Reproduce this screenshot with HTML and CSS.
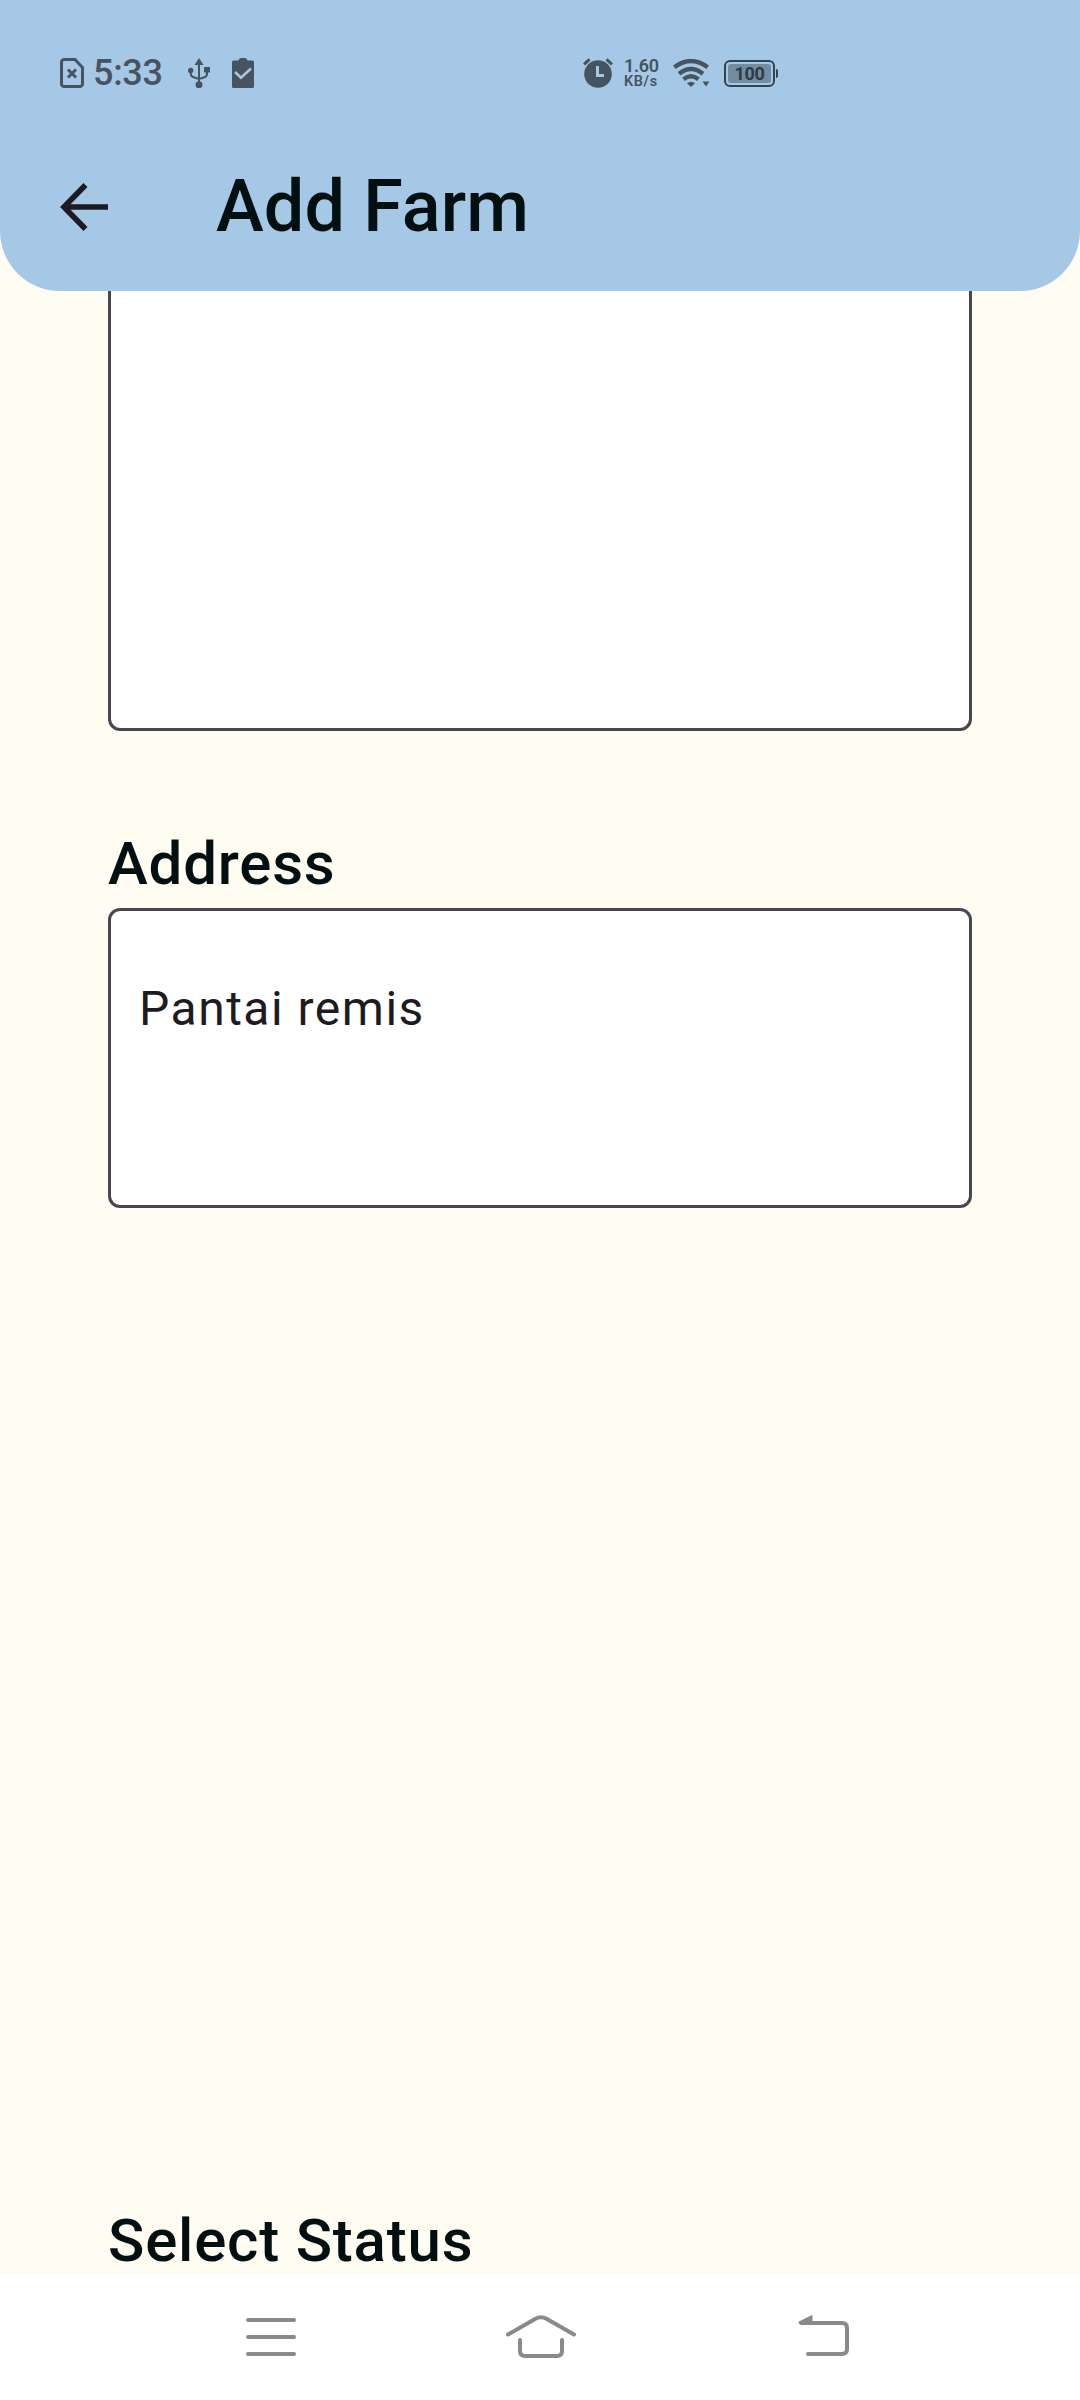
FILE: index.html
```html
<!DOCTYPE html>
<html lang="en">
<head>
<meta charset="utf-8">
<title>Add Farm</title>
<link rel="stylesheet" href="styles.css">
</head>
<body>
<div class="screen">
  <header class="header">
    <div class="status">
      <svg class="ic-sim" width="24" height="30" viewBox="0 0 24 30"><path d="M4 1.5H15L22.5 9.500V26a2.500 2.500 0 0 1-2.500 2.500H4A2.500 2.500 0 0 1 1.500 26V4A2.500 2.500 0 0 1 4 1.500Z" fill="none" stroke="currentColor" stroke-width="3"/><path d="M8 11.500l8 8M16 11.500l-8 8" stroke="currentColor" stroke-width="3"/></svg>
      <span class="time">5:33</span>
      <svg class="ic-usb" width="22" height="30" viewBox="0 0 22 30"><path d="M11 5V27M2.700 13v2.500q0 3 3 3.800L11 21l5.500-1.700q2.500-.8 2.500-3.800V13" fill="none" stroke="currentColor" stroke-width="2"/><path d="M11 0l4.500 7h-9Z" fill="currentColor"/><circle cx="2.700" cy="12.500" r="2.700" fill="currentColor"/><rect x="16" y="9" width="6" height="5.500" fill="currentColor"/><circle cx="11" cy="26.700" r="3.500" fill="currentColor"/></svg>
      <svg class="ic-clip" width="22" height="30" viewBox="0 0 22 30"><path d="M1.500 2.500H6.500Q7 0 9 0h4q2 0 2.500 2.500h5Q22 2.500 22 4V28.500Q22 30 20.500 30H1.500Q0 30 0 28.500V4Q0 2.500 1.500 2.500Z" fill="currentColor"/><path d="M3 14l6 5.700L19 10.500" fill="none" stroke="#a5c8e6" stroke-width="2.500"/></svg>
      <svg class="ic-alarm" width="30" height="30" viewBox="0 0 30 30"><circle cx="15" cy="16" r="13.800" fill="currentColor"/><path d="M1 6.300L6.500 1.300M23.500 1.300L29 6.300" stroke="currentColor" stroke-width="3"/><path d="M14.500 8v9.500H21" fill="none" stroke="#a5c8e6" stroke-width="3"/></svg>
      <div class="rate"><span class="rate-n">1.60</span><span class="rate-u">KB/s</span></div>
      <svg class="ic-wifi" width="37" height="28" viewBox="0 0 37 28"><g fill="none" stroke="currentColor" stroke-width="4.300"><path d="M1.300 8.200Q18 -4.200 34.700 8.200"/><path d="M6 14.700Q18 5.200 30 14.700"/><path d="M10.500 20.300Q18 14.300 25.500 20.300"/></g><path d="M14 24.300Q18 21.300 22 24.300L18 28ZM29.500 22.500h7L33 27.500Z" fill="currentColor"/></svg>
      <div class="battery"><span>100</span></div>
    </div>
    <div class="appbar">
      <svg width="48" height="48" viewBox="0 0 48 48"><path d="M25.500 2L4 24l21.500 22M4.500 24H48" fill="none" stroke="#1d1b20" stroke-width="5.600"/></svg>
      <h1>Add Farm</h1>
    </div>
  </header>
  <main class="content">
    <div class="box box-map"></div>
    <h2>Address</h2>
    <div class="box box-address">Pantai remis</div>
    <h2 class="status-label">Select Status</h2>
  </main>
  <nav class="nav">
    <svg width="50" height="38" viewBox="0 0 50 38"><path d="M2 2H48M2 19H48M2 36H48"/></svg>
    <svg width="70" height="44" viewBox="0 0 70 44"><path d="M2 19.500L29.500 3.700Q35 .8 40.500 3.700L68 19.500M14 25V36q0 5 5 5h32q5 0 5-5V25"/></svg>
    <svg width="52" height="44" viewBox="0 0 52 44"><path d="M3 8H44q5 0 5 5v21q0 5-5 5H10"/><path class="tip" d="M1 7L14 .5V8H2Z"/></svg>
  </nav>
</div>
</body>
</html>
```
FILE: styles.css
```css
* { box-sizing: border-box; }
body { margin: 0; font-family: Roboto, "Liberation Sans", sans-serif; }
svg { display: block; flex: none; }
.screen { width: 1080px; height: 2400px; display: flex; flex-direction: column; background: #fffdf1; overflow: hidden; }
.header { height: 291px; flex: none; background: #a5c8e6; border-radius: 0 0 60px 60px; position: relative; z-index: 1; }
.status { height: 146px; padding-left: 60px; display: flex; align-items: center; color: #45545f; }
.time { width: 75px; margin-left: 9px; font-size: 36px; font-weight: 500; line-height: 42px; letter-spacing: -.3px; }
.ic-usb { margin-left: 20px; }
.ic-clip { margin-left: 22px; }
.ic-alarm { margin-left: 329px; }
.rate { width: 36px; margin-left: 11px; display: flex; flex-direction: column; font-weight: 600; white-space: nowrap; }
.rate-n { font-size: 18px; line-height: 17px; letter-spacing: -.3px; }
.rate-u { font-size: 14.500px; line-height: 15px; letter-spacing: .6px; }
.ic-wifi { margin-left: 13px; }
.battery { width: 51px; height: 27px; margin-left: 14px; border: 2px solid #35434e; border-radius: 6px; padding: 2px; position: relative; }
.battery span { display: block; height: 19px; background: #728da2; border-radius: 3px; color: #2e3b45; font-size: 18px; line-height: 20px; font-weight: 700; letter-spacing: -.3px; text-align: center; }
.battery::after { content: ""; position: absolute; left: 50px; top: 7px; width: 2px; height: 9px; background: #35434e; border-radius: 0 2px 2px 0; }
.appbar { height: 122px; padding-left: 60px; display: flex; align-items: center; gap: 108px; }
h1, h2 { margin: 0; font-weight: 500; color: #001010; white-space: nowrap; }
h1 { font-size: 72px; line-height: 84px; letter-spacing: .1px; }
h2 { font-size: 60px; line-height: 60px; letter-spacing: .8px; }
.content { flex: 1; min-height: 0; padding: 0 108px; overflow: hidden; margin-top: -60px; }
.box { background: #fff; border: 3px solid #49454f; border-radius: 12px; }
.box-map { height: 500px; margin-bottom: 103px; }
.content h2 + .box { margin-top: 14px; }
.box-address { height: 300px; padding: 70px 28px; font-size: 48px; line-height: 56px; letter-spacing: 1.500px; color: #1d1b20; }
.status-label { margin-top: 1003px; }
.nav { height: 126px; flex: none; background: #fff; padding-left: 246px; display: flex; align-items: center; }
.nav svg + svg { margin-left: 210px; }
.nav svg:last-child { margin-left: 222px; }
.nav path { fill: none; stroke: #8a8a8a; stroke-width: 4; stroke-linecap: round; }
.nav .tip { fill: #8a8a8a; stroke-width: 1; stroke-linejoin: round; }
```
